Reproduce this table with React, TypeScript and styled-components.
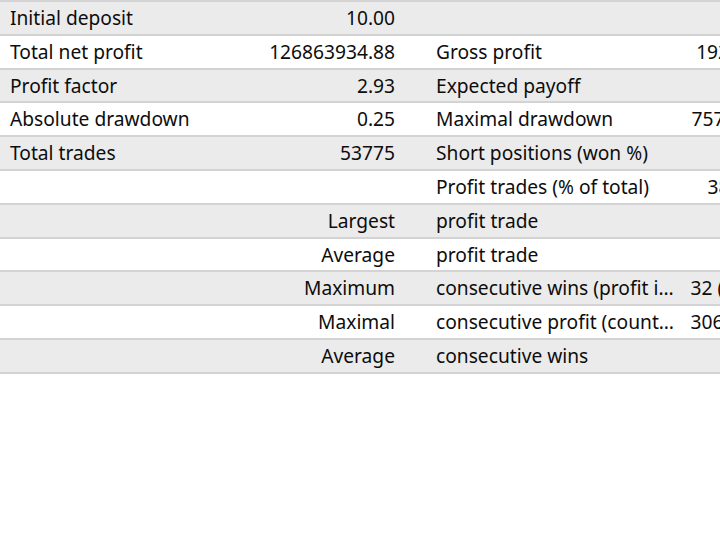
import React from "react";
import styled, { createGlobalStyle } from "styled-components";

const Global = createGlobalStyle`
  html, body {
    margin: 0;
    padding: 0;
    background: #ffffff;
    overflow: hidden;
  }
  body {
    font-family: "Noto Sans", "Open Sans", "DejaVu Sans", sans-serif;
  }
`;

const Table = styled.div`
  width: 832px;
  display: flex;
  flex-direction: column;
  border-bottom: 2px solid #d3d3d3;
`;

const Row = styled.div<{ $shaded: boolean }>`
  box-sizing: border-box;
  height: 33.8px;
  display: grid;
  grid-template-columns: 215px 190px 270px 157px;
  align-items: center;
  border-top: 2px solid #d3d3d3;
  background: ${(p) => (p.$shaded ? "#ebebeb" : "#ffffff")};
  font-size: 19.2px;
  color: #0d0d0d;
`;

const Cell = styled.div<{ $align?: "left" | "right" }>`
  white-space: nowrap;
  overflow: hidden;
  text-overflow: ellipsis;
  text-align: ${(p) => p.$align ?? "left"};
  line-height: 1.4;
  padding-top: 1px;
`;

const Label = styled(Cell)`
  padding-left: 10px;
`;

const Value = styled(Cell)`
  padding-right: 10px;
`;

const Label2 = styled(Cell)`
  padding-left: 31px;
  padding-right: 0;
`;

const Value2 = styled(Cell)`
  padding-right: 10px;
`;

type RowData = [string, string, string, string];

const rows: RowData[] = [
  ["Initial deposit", "10.00", "", ""],
  ["Total net profit", "126863934.88", "Gross profit", "192646781.09"],
  ["Profit factor", "2.93", "Expected payoff", "2359.17"],
  ["Absolute drawdown", "0.25", "Maximal drawdown", "757.48 (2.75%)"],
  ["Total trades", "53775", "Short positions (won %)", "1960 (52%)"],
  ["", "", "Profit trades (% of total)", "3812 (7.09%)"],
  ["", "Largest", "profit trade", "9283.00"],
  ["", "Average", "profit trade", "5012.40"],
  ["", "Maximum", "consecutive wins (profit in money)", "32 (810867.21)"],
  ["", "Maximal", "consecutive profit (count of wins)", "3061287.61 (9)"],
  ["", "Average", "consecutive wins", "7"],
];

export default function App() {
  return (
    <>
      <Global />
      <Table>
        {rows.map((r, i) => (
          <Row key={i} $shaded={i % 2 === 0}>
            <Label>{r[0]}</Label>
            <Value $align="right">{r[1]}</Value>
            <Label2>{r[2]}</Label2>
            <Value2 $align="right">{r[3]}</Value2>
          </Row>
        ))}
      </Table>
    </>
  );
}
